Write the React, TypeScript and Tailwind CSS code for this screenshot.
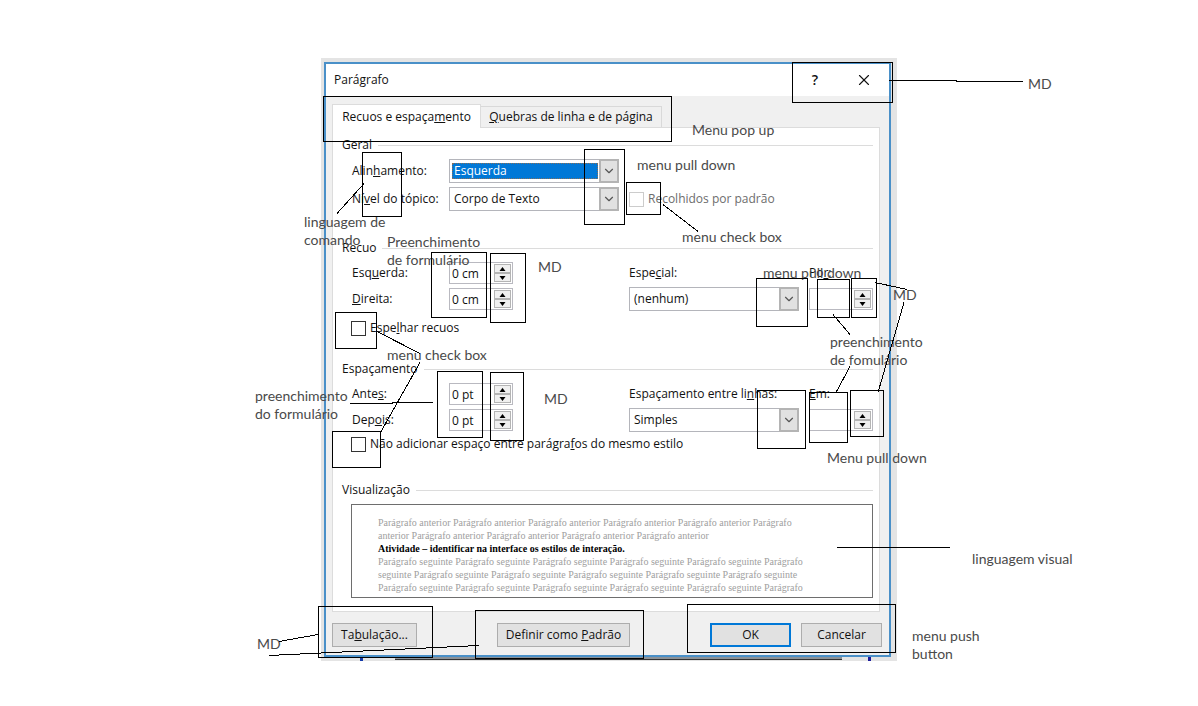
import { ReactNode } from "react";
import { ChevronDown, X } from "lucide-react";

function Group({ title, className = "", children }: { title: string; className?: string; children: ReactNode }) {
  return (
    <section className={className}>
      <div className="mb-[5px] flex h-[18px] items-center gap-1.5 pr-[6px] pl-[9px]">
        <h2>{title}</h2>
        <div className="h-px flex-1 bg-[#dcdcdc]" />
      </div>
      <div className="pr-[6px] pl-[18px]">{children}</div>
    </section>
  );
}

function Combo({ id, value, selected = false }: { id: string; value: string; selected?: boolean }) {
  return (
    <div className="relative flex h-6 w-[170px] items-center border border-[#b4b5bb] bg-white pl-0.5">
      <select
        id={id}
        className={
          selected
            ? "mr-5 h-4 flex-1 appearance-none border border-dotted border-[#86705c] bg-[#0078d7] pl-px leading-[14px] text-white outline-none"
            : "mr-5 h-5 flex-1 appearance-none bg-transparent pl-0.5 outline-none"
        }
      >
        <option>{value}</option>
      </select>
      <span className="pointer-events-none absolute -top-px -right-px flex h-6 w-5 items-center justify-center border-2 border-[#b4b4b4] bg-[#e1e1e1]">
        <ChevronDown size={14} strokeWidth={2} className="text-[#555]" />
      </span>
    </div>
  );
}

function Spin({ id, value = "" }: { id: string; value?: string }) {
  const button = "flex h-[9px] w-full items-center justify-center border border-[#b4b4b4] bg-[#f0f0f0]";
  return (
    <div className="flex h-[22px] w-16 items-center border border-[#b9b9c0] bg-white pr-px">
      <input id={id} defaultValue={value} className="h-5 w-full min-w-0 flex-1 bg-transparent pl-0.5 outline-none" />
      <div className="flex w-[17px] shrink-0 flex-col">
        <button type="button" aria-label="Aumentar" className={button}>
          <svg width="7" height="4" viewBox="0 0 7 4"><path d="M3.5 0 6.5 4H.5z" /></svg>
        </button>
        <button type="button" aria-label="Diminuir" className={button}>
          <svg width="7" height="4" viewBox="0 0 7 4"><path d="M3.5 4 6.5 0H.5z" /></svg>
        </button>
      </div>
    </div>
  );
}

function Check({ id, disabled = false, children }: { id: string; disabled?: boolean; children: ReactNode }) {
  return (
    <div className="flex h-[18px] items-center gap-1">
      <input
        id={id}
        type="checkbox"
        disabled={disabled}
        className="size-[15px] shrink-0 appearance-none border border-[#333] bg-white checked:bg-[#0078d7] disabled:border-[#ccc]"
      />
      <label htmlFor={id} className={disabled ? "text-[#6d6d6d]" : ""}>{children}</label>
    </div>
  );
}

function SpinRow({ id, value, children }: { id: string; value: string; children: ReactNode }) {
  return (
    <div className="flex items-center">
      <label htmlFor={id} className="w-[98px] pl-px">{children}</label>
      <Spin id={id} value={value} />
    </div>
  );
}

const notes: { at: string; lines: string[] }[] = [
  { at: "left-[1028px] top-[75px]", lines: ["MD"] },
  { at: "left-[692px] top-[121px]", lines: ["Menu pop up"] },
  { at: "left-[637px] top-[156px]", lines: ["menu pull down"] },
  { at: "left-[682px] top-[228px]", lines: ["menu check box"] },
  { at: "left-[304px] top-[213px]", lines: ["linguagem de", "comando"] },
  { at: "left-[387px] top-[233px]", lines: ["Preenchimento", "de formulário"] },
  { at: "left-[538px] top-[258px]", lines: ["MD"] },
  { at: "left-[763px] top-[264px]", lines: ["menu pull down"] },
  { at: "left-[893px] top-[286px]", lines: ["MD"] },
  { at: "left-[830px] top-[333px]", lines: ["preenchimento", "de fomulário"] },
  { at: "left-[387px] top-[346px]", lines: ["menu check box"] },
  { at: "left-[255px] top-[387px]", lines: ["preenchimento", "do formulário"] },
  { at: "left-[544px] top-[390px]", lines: ["MD"] },
  { at: "left-[827px] top-[449px]", lines: ["Menu pull down"] },
  { at: "left-[972px] top-[550px]", lines: ["linguagem visual"] },
  { at: "left-[257px] top-[635px]", lines: ["MD"] },
  { at: "left-[912px] top-[627px]", lines: ["menu push", "button"] },
];

const frames = [
  [792, 62, 100, 40], [323, 96, 348, 45], [362, 152, 39, 64], [584, 149, 40, 75], [626, 182, 34, 32],
  [431, 252, 55, 65], [490, 253, 35, 69], [335, 312, 41, 36], [437, 371, 45, 66], [490, 372, 33, 68],
  [332, 431, 48, 36], [756, 278, 51, 48], [817, 279, 32, 38], [851, 278, 25, 39], [757, 390, 48, 58],
  [809, 392, 38, 50], [850, 390, 33, 46], [318, 606, 114, 51], [475, 610, 168, 48], [687, 604, 208, 48],
];

const leaders = [
  "889,80 956,80 956,81 1023,81", "337,213 364,183", "663,204 698,231", "377,331 420,353", "420,362 381,431",
  "350,403 392,403 392,402 433,402", "875,282 907,289", "904,302 878,392", "833,314 850,334", "850,366 836,392",
  "837,547 950,547", "279,641 318,634", "269,655 479,645",
];

function Annotations() {
  return (
    <div className="pointer-events-none absolute -top-[58px] -left-[321px] h-[706px] w-[1198px] font-['Lato',sans-serif] text-sm leading-[18px] text-[#4a4a4a]">
      {notes.map((note) => (
        <p key={note.at} className={`absolute whitespace-nowrap ${note.at}`}>
          {note.lines.map((line) => (
            <span key={line} className="block">{line}</span>
          ))}
        </p>
      ))}
      <svg className="absolute inset-0 size-full" fill="none" stroke="#000" shapeRendering="crispEdges">
        <g transform="translate(.5 .5)">
          {frames.map(([x, y, w, h]) => (
            <rect key={`${x}-${y}`} x={x} y={y} width={w} height={h} />
          ))}
        </g>
        <g transform="translate(0 .5)">
          {leaders.map((points) => (
            <polyline key={points} points={points} />
          ))}
        </g>
      </svg>
    </div>
  );
}

export default function App() {
  const push = "h-6 border border-[#adadad] bg-[#e1e1e1]";
  return (
    <main className="flex min-h-screen justify-center overflow-hidden bg-white pt-[58px] pl-5 font-['Open_Sans','Noto_Sans',sans-serif] text-xs leading-[18px] text-[#111]">
      <div className="relative w-full max-w-[576px] self-start bg-[#e4e4e4] pt-1 pr-[6px] pl-[3px]">
        <div role="dialog" aria-labelledby="title" className="border-2 border-[#4a90c8] bg-[#f0f0f0]">
          <header className="flex h-8 items-center bg-white pl-2">
            <h1 id="title" className="flex-1">Parágrafo</h1>
            <button type="button" aria-label="Ajuda" className="h-8 w-12 text-sm font-semibold">?</button>
            <button type="button" aria-label="Fechar" className="flex h-8 w-[50px] items-center justify-center">
              <X size={18} strokeWidth={1.5} />
            </button>
          </header>

          <div className="px-[6px] pt-2 pb-2">
            <div role="tablist" className="flex items-end">
              <button type="button" role="tab" aria-selected="true" className="relative -mb-px h-6 w-[149px] border border-b-0 border-[#dcdcdc] bg-white">
                Recuos e espaça<u>m</u>ento
              </button>
              <button type="button" role="tab" aria-selected="false" className="h-[21px] w-[181px] border border-b-0 border-l-0 border-[#d9d9d9] bg-[#f0f0f0]">
                <u>Q</u>uebras de linha e de página
              </button>
            </div>

            <div className="mr-[3px] border border-[#dcdcdc] bg-white pt-2 pb-[13px]">
              <Group title="Geral">
                <div className="flex items-center">
                  <label htmlFor="align" className="w-[98px] pl-px">Alin<u>h</u>amento:</label>
                  <Combo id="align" value="Esquerda" selected />
                </div>
                <div className="mt-1 flex items-center">
                  <label htmlFor="level" className="w-[98px] pl-px whitespace-nowrap">Ní<u>v</u>el do tópico:</label>
                  <Combo id="level" value="Corpo de Texto" />
                  <div className="ml-2.5">
                    <Check id="collapsed" disabled>Recolhidos por padrão</Check>
                  </div>
                </div>
              </Group>

              <Group title="Recuo" className="mt-7">
                <div className="flex items-start justify-between">
                  <div className="flex flex-col gap-1">
                    <SpinRow id="left" value="0 cm">Esq<u>u</u>erda:</SpinRow>
                    <SpinRow id="right" value="0 cm"><u>D</u>ireita:</SpinRow>
                  </div>
                  <div className="grid h-12 grid-cols-[170px_64px] content-start items-center gap-x-2.5 gap-y-[3px]">
                    <label htmlFor="special" className="h-[22px] leading-[22px]">Espe<u>c</u>ial:</label>
                    <label htmlFor="by" className="h-[22px] leading-[22px]">Po<u>r</u>:</label>
                    <Combo id="special" value="(nenhum)" />
                    <Spin id="by" />
                  </div>
                </div>
                <div className="mt-[9px]">
                  <Check id="mirror">Espe<u>l</u>har recuos</Check>
                </div>
              </Group>

              <Group title="Espaçamento" className="mt-[23px]">
                <div className="flex items-start justify-between">
                  <div className="flex flex-col gap-1">
                    <SpinRow id="before" value="0 pt">Ante<u>s</u>:</SpinRow>
                    <SpinRow id="after" value="0 pt">Dep<u>o</u>is:</SpinRow>
                  </div>
                  <div className="grid h-12 grid-cols-[170px_64px] content-start items-center gap-x-2.5 gap-y-[3px]">
                    <label htmlFor="spacing" className="h-[22px] leading-[22px]">Espaçamento entre li<u>n</u>has:</label>
                    <label htmlFor="at" className="h-[22px] leading-[22px]"><u>E</u>m:</label>
                    <Combo id="spacing" value="Simples" />
                    <Spin id="at" />
                  </div>
                </div>
                <div className="mt-1">
                  <Check id="nospace">Não adicionar espaço entre parágra<u>f</u>os do mesmo estilo</Check>
                </div>
              </Group>

              <Group title="Visualização" className="mt-7">
                <div className="h-[94px] overflow-hidden border border-[#6e6e6e] pt-[11px] pl-[26px] font-['Liberation_Serif',serif] text-[10px] leading-[13px] whitespace-nowrap text-[#a0a0a0]">
                  <p>Parágrafo anterior Parágrafo anterior Parágrafo anterior Parágrafo anterior Parágrafo anterior Parágrafo</p>
                  <p>anterior Parágrafo anterior Parágrafo anterior Parágrafo anterior Parágrafo anterior</p>
                  <p className="font-bold text-black">Atividade – identificar na interface os estilos de interação.</p>
                  <p>Parágrafo seguinte Parágrafo seguinte Parágrafo seguinte Parágrafo seguinte Parágrafo seguinte Parágrafo</p>
                  <p>seguinte Parágrafo seguinte Parágrafo seguinte Parágrafo seguinte Parágrafo seguinte Parágrafo seguinte</p>
                  <p>Parágrafo seguinte Parágrafo seguinte Parágrafo seguinte Parágrafo seguinte Parágrafo seguinte Parágrafo</p>
                </div>
              </Group>
            </div>

            <footer className="mt-[11px] flex pr-px">
              <button type="button" className={`${push} w-[85px]`}>Ta<u>b</u>ulação...</button>
              <button type="button" className={`${push} ml-20 w-[133px]`}>Definir como <u>P</u>adrão</button>
              <button type="button" className="ml-auto h-6 w-[81px] border-2 border-[#0078d7] bg-[#e1e1e1]">OK</button>
              <button type="button" className={`${push} ml-2.5 w-[81px]`}>Cancelar</button>
            </footer>
          </div>
        </div>
        <div className="flex h-1 items-start">
          <div className="ml-9 h-full w-[3px] bg-[#1238a8]" />
          <div className="ml-8 h-[3px] w-[447px] border-b border-[#333] bg-[#8b9298]" />
          <div className="ml-[26px] h-full w-[3px] bg-[#1a1a9c]" />
        </div>
        <Annotations />
      </div>
    </main>
  );
}
